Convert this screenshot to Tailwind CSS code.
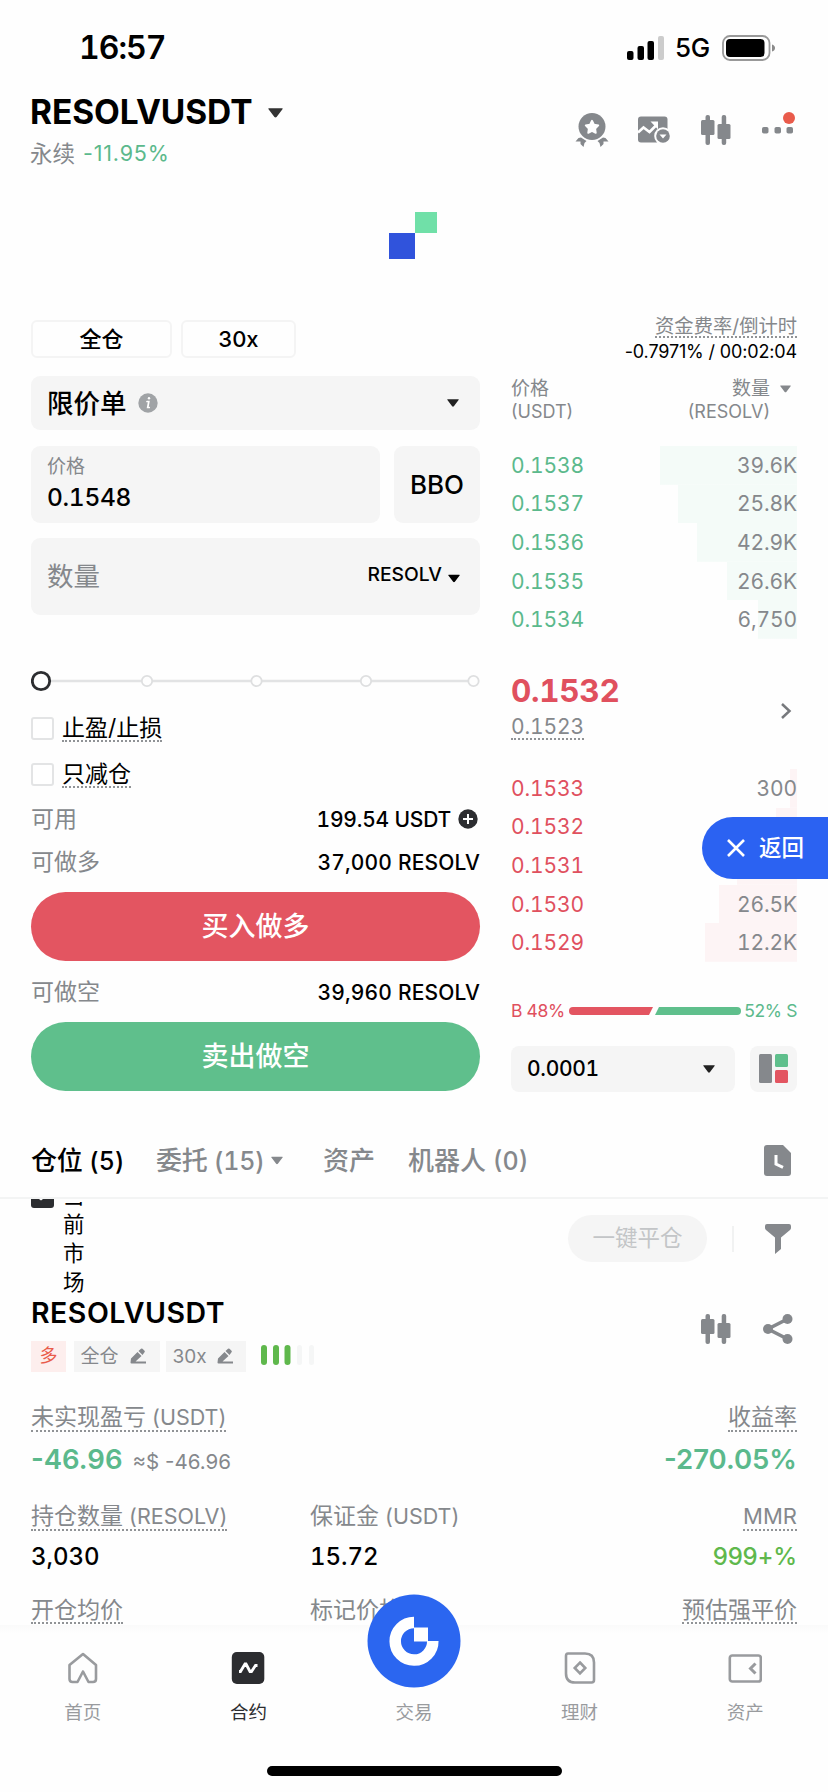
<!DOCTYPE html>
<html lang="zh-CN">
<head>
<meta charset="utf-8">
<title>RESOLVUSDT</title>
<script src="https://cdn.jsdelivr.net/npm/@tailwindcss/browser@4"></script>
</head>
<body class="bg-[#fefefe]">
<svg width="0" height="0" class="hidden">
  <symbol id="tri" viewBox="0 0 14 9"><path d="M1 0h12q1.300 0 .5 1L8 8.300q-1 .9-2 0L.5 1Q-.3 0 1 0Z" fill="currentColor"/></symbol>
  <symbol id="candles" viewBox="0 0 30 30"><g fill="currentColor"><rect x="4.500" y="0" width="4.500" height="30" rx="2"/><rect x="0" y="5" width="13.500" height="15" rx="1.500"/><rect x="20.700" y="0" width="4.500" height="30" rx="2"/><rect x="16.500" y="9" width="13" height="15" rx="1.500"/></g></symbol>
  <symbol id="pen" viewBox="0 0 16 16"><g fill="currentColor"><path d="M1 10.500 7.500 4l4 4L5.500 13.500H16V15.500H1.500Q.5 15.500.5 14.500Z"/><path d="M8.500 3 11 .8q.8-.6 1.500 0l2 2q.8.8 0 1.500L12.500 7Z"/></g></symbol>
</svg>
<main class="relative flex h-[1792px] w-[828px] flex-col overflow-hidden bg-[#fefefe] font-['Inter','Noto_Sans_CJK_SC',sans-serif] leading-none text-black whitespace-nowrap">

  <!-- Status bar -->
  <div class="flex h-[95px] shrink-0 items-center justify-between pl-[79px] pr-[52px]">
    <span class="text-[32px] font-semibold tracking-[-1px] tabular-nums">16:57</span>
    <div class="flex items-center">
      <svg width="37" height="24" viewBox="0 0 37 24"><rect x="0" y="15" width="6.500" height="9" rx="2"/><rect x="10.500" y="10" width="6.500" height="14" rx="2"/><rect x="20.500" y="5" width="6.500" height="19" rx="2"/><rect x="31" y="0" width="6" height="24" rx="2" fill="#ccc"/></svg>
      <span class="ml-[11px] w-[47px] text-[26px] font-medium tracking-[-0.4px]">5G</span>
      <svg width="54" height="26" viewBox="0 0 54 26"><rect x="1" y="1" width="46.500" height="24" rx="7" fill="none" stroke="#999" stroke-width="1.800"/><rect x="4" y="4" width="38.500" height="18" rx="4"/><path d="M50 9.500q3 1 3 3.500t-3 3.500Z" fill="#8a8a8a"/></svg>
    </div>
  </div>

  <!-- Pair header -->
  <header class="flex h-[117px] shrink-0 justify-between pl-[30px] pr-[30px]">
    <div>
      <div class="flex h-[36px] items-center">
        <h1 class="text-[33.500px] font-bold tracking-[-0.1px]">RESOLVUSDT</h1>
        <svg class="ml-[16px] text-[#333]" width="15" height="10"><use href="#tri"/></svg>
      </div>
      <div class="mt-[11px] flex h-[24px] items-center gap-[8px] text-[22.500px] text-[#85888c]"><span>永续</span><span class="text-[21.500px] tracking-[0.8px] text-[#5bb98c]">-11.95%</span></div>
    </div>
    <div class="mt-[16px] flex h-[38px] items-center text-[#85888c]">
      <svg width="34" height="36" viewBox="0 0 34 36"><g fill="currentColor"><circle cx="17" cy="14.500" r="13.500"/><path d="M6 25.500 11.500 29 9.500 31 8.500 35 5.500 32V29.500L.5 29.500 3.500 26Z"/><path d="M28 25.500 22.500 29 24.500 31 25.500 35 28.500 32V29.500L33.500 29.500 30.500 26Z"/></g><path d="m17 8.700 2 4 4.300.7-3.100 3.100.6 4.400-3.800-2-3.800 2 .6-4.400-3.100-3.100 4.300-.7Z" fill="#fff" stroke="#fff" stroke-width="1.800" stroke-linejoin="round"/></svg>
      <svg class="ml-[29px]" width="33" height="28" viewBox="0 0 33 28"><rect x="0" y=".5" width="29.500" height="26" rx="3" fill="currentColor"/><path d="m0 16.500 5.500-5 6 4.500L19 8.500" fill="none" stroke="#fff" stroke-width="2.600"/><path d="M12.500 5.500H20v8Z" fill="#fff"/><circle cx="25" cy="20" r="8.800" fill="#fefefe"/><circle cx="25" cy="20" r="6.800" fill="currentColor"/><path d="M21.500 18.500h7L25 22.500Z" fill="#fff"/></svg>
      <svg class="ml-[30px]" width="30" height="30"><use href="#candles"/></svg>
      <svg class="ml-[31px]" width="36" height="38" viewBox="0 0 36 38"><g fill="currentColor"><rect x="0" y="16" width="6.500" height="6.500" rx="1.800"/><rect x="12.500" y="16" width="6.500" height="6.500" rx="1.800"/><rect x="24.500" y="16" width="6.500" height="6.500" rx="1.800"/></g><circle cx="27" cy="7" r="6" fill="#e95b4b"/></svg>
    </div>
  </header>

  <!-- Loading mark -->
  <div class="flex h-[108px] shrink-0 justify-center">
    <svg width="50" height="48" viewBox="0 0 50 48"><rect x="0" y="21" width="26" height="26" fill="#3053dc"/><rect x="26" y="0" width="22" height="21" fill="#70e0a8"/></svg>
  </div>

  <section class="flex h-[804px] shrink-0 pl-[31px] pr-[31px]">
    <!-- Order form -->
    <div class="flex w-[449px] flex-col">
      <div class="flex h-[38px] gap-[9px] text-[22px] font-medium">
        <div class="flex w-[141px] items-center justify-center rounded-[6px] border-2 border-[#f4f4f4]">全仓</div>
        <div class="flex w-[115px] items-center justify-center rounded-[6px] border-2 border-[#f4f4f4]">30x</div>
      </div>
      <div class="mt-[18px] flex h-[54px] items-center rounded-[9px] bg-[#f5f5f5] px-[16px]">
        <span class="text-[26.500px] font-medium">限价单</span>
        <svg class="ml-[11px]" width="20" height="20" viewBox="0 0 20 20"><circle cx="10" cy="10" r="9.700" fill="#a0a3a6"/><path d="M9 8.500h1.800L9.700 14.500h1.500" fill="none" stroke="#fff" stroke-width="1.700" stroke-linecap="round"/><circle cx="11" cy="5.300" r="1.200" fill="#fff"/></svg>
        <svg class="ml-auto mr-[5px] text-[#222]" width="12" height="8"><use href="#tri"/></svg>
      </div>
      <div class="mt-[16px] flex h-[77px] gap-[14px]">
        <div class="flex flex-1 flex-col rounded-[9px] bg-[#f5f5f5] px-[16px] pt-[11px]">
          <span class="text-[19px] text-[#85888c]">价格</span>
          <span class="mt-[9px] text-[24.500px] font-medium tracking-[-0.3px] tabular-nums">0.1548</span>
        </div>
        <div class="flex w-[86px] items-center justify-center rounded-[9px] bg-[#f5f5f5] text-[26px] font-medium">BBO</div>
      </div>
      <div class="mt-[15px] flex h-[77px] items-center rounded-[9px] bg-[#f5f5f5] px-[16px]">
        <span class="text-[26.500px] text-[#85888c]">数量</span>
        <span class="mb-[3px] ml-auto text-[19.300px] font-medium">RESOLV</span>
        <svg class="ml-[6px] mr-[4px] mt-[3px]" width="12" height="9"><use href="#tri"/></svg>
      </div>
      <svg class="mt-[55px] shrink-0" width="449" height="22" viewBox="0 0 449 22"><path d="M20 11H438" stroke="#e2e3e4" stroke-width="2.500"/><g fill="#fefefe" stroke="#dedfe0" stroke-width="1.800"><circle cx="116" cy="11" r="5.200"/><circle cx="225.500" cy="11" r="5.200"/><circle cx="335" cy="11" r="5.200"/><circle cx="442.500" cy="11" r="5.200"/></g><circle cx="10" cy="11" r="8.700" fill="#fefefe" stroke="#2c2d30" stroke-width="2.800"/></svg>
      <div class="mt-[23px] flex h-[26px] items-center gap-[8px]">
        <span class="size-[23px] rounded-[3px] border-2 border-[#e3e4e5] bg-white"></span>
        <span class="mt-[2px] border-b-2 border-dotted border-[#909396] text-[23px]">止盈/止损</span>
      </div>
      <div class="mt-[20px] flex h-[26px] items-center gap-[8px]">
        <span class="size-[23px] rounded-[3px] border-2 border-[#e3e4e5] bg-white"></span>
        <span class="mt-[2px] border-b-2 border-dotted border-[#909396] text-[23px]">只减仓</span>
      </div>
      <div class="mt-[18px] flex h-[28px] items-center text-[21px]">
        <span class="text-[23px] text-[#85888c]">可用</span><span class="ml-auto font-medium tracking-[-0.2px] tabular-nums">199.54 USDT</span>
        <svg class="ml-[7px] mr-[2px]" width="20" height="20" viewBox="0 0 20 20"><circle cx="10" cy="10" r="9.700" fill="#2c2d30"/><path d="M10 5v10M5 10h10" stroke="#fff" stroke-width="2"/></svg>
      </div>
      <div class="mt-[15px] flex h-[28px] items-center justify-between text-[21px]">
        <span class="text-[23px] text-[#85888c]">可做多</span><span class="font-medium tracking-[0.15px] tabular-nums">37,000 RESOLV</span>
      </div>
      <div class="mt-[16px] flex h-[69px] items-center justify-center rounded-full bg-[#e35561] text-[27px] font-medium text-white">买入做多</div>
      <div class="mt-[17px] flex h-[28px] items-center justify-between text-[21px]">
        <span class="text-[23px] text-[#85888c]">可做空</span><span class="font-medium tracking-[0.15px] tabular-nums">39,960 RESOLV</span>
      </div>
      <div class="mt-[16px] flex h-[69px] items-center justify-center rounded-full bg-[#5fbf8c] text-[27px] font-medium text-white">卖出做空</div>
    </div>

    <!-- Order book -->
    <div class="ml-[31px] flex w-[286px] flex-col text-[#85888c]">
      <div class="mt-[-3px] flex h-[44px] flex-col items-end">
        <span class="border-b-2 border-dotted border-[#909396] text-[19.300px]">资金费率/倒计时</span>
        <span class="mt-[5px] text-[18px] tracking-[-0.15px] text-black">-0.7971% / 00:02:04</span>
      </div>
      <div class="mt-[18px] flex h-[67px] justify-between text-[18px]">
        <div class="flex flex-col gap-[5px]"><span class="text-[19px]">价格</span><span>(USDT)</span></div>
        <div class="flex gap-[10px]"><div class="flex flex-col items-end gap-[5px]"><span class="text-[19px]">数量</span><span>(RESOLV)</span></div><svg class="mr-[6px] mt-[6px]" width="11" height="8"><use href="#tri"/></svg></div>
      </div>
      <div class="flex flex-col text-[21px] tracking-[-0.1px] tabular-nums">
        <div class="flex h-[38.600px] items-center justify-between bg-[linear-gradient(#f4fbf8,#f4fbf8)] bg-right bg-no-repeat bg-[length:137px_100%]"><span class="text-[#5bb98c]">0.1538</span><span>39.6K</span></div>
        <div class="flex h-[38.600px] items-center justify-between bg-[linear-gradient(#f4fbf8,#f4fbf8)] bg-right bg-no-repeat bg-[length:119px_100%]"><span class="text-[#5bb98c]">0.1537</span><span>25.8K</span></div>
        <div class="flex h-[38.600px] items-center justify-between bg-[linear-gradient(#f4fbf8,#f4fbf8)] bg-right bg-no-repeat bg-[length:100px_100%]"><span class="text-[#5bb98c]">0.1536</span><span>42.9K</span></div>
        <div class="flex h-[38.600px] items-center justify-between bg-[linear-gradient(#f4fbf8,#f4fbf8)] bg-right bg-no-repeat bg-[length:70px_100%]"><span class="text-[#5bb98c]">0.1535</span><span>26.6K</span></div>
        <div class="flex h-[38.600px] items-center justify-between bg-[linear-gradient(#f4fbf8,#f4fbf8)] bg-right bg-no-repeat bg-[length:39px_100%]"><span class="text-[#5bb98c]">0.1534</span><span>6,750</span></div>
      </div>
      <div class="flex h-[126px] items-center justify-between pt-[16px] tabular-nums">
        <div class="mb-[5px] flex flex-col items-start">
          <span class="text-[31.500px] font-bold tracking-[-0.3px] text-[#e0505e]">0.1532</span>
          <span class="mt-[10px] border-b-2 border-dotted border-[#909396] pb-px text-[21px] tracking-[-0.1px]">0.1523</span>
        </div>
        <svg class="mr-[5px] mt-[2px]" width="12" height="18" viewBox="0 0 12 18"><path d="m2 2 7.500 7L2 16" fill="none" stroke="#77797d" stroke-width="2.500"/></svg>
      </div>
      <div class="mt-[4px] flex flex-col text-[21px] tracking-[-0.1px] tabular-nums">
        <div class="flex h-[38.600px] items-center justify-between bg-[linear-gradient(#fdf4f5,#fdf4f5)] bg-right bg-no-repeat bg-[length:7px_100%]"><span class="text-[#e0505e]">0.1533</span><span>300</span></div>
        <div class="flex h-[38.600px] items-center justify-between bg-[linear-gradient(#fdf4f5,#fdf4f5)] bg-right bg-no-repeat bg-[length:21px_100%]"><span class="text-[#e0505e]">0.1532</span></div>
        <div class="flex h-[38.600px] items-center justify-between bg-[linear-gradient(#fdf4f5,#fdf4f5)] bg-right bg-no-repeat bg-[length:60px_100%]"><span class="text-[#e0505e]">0.1531</span></div>
        <div class="flex h-[38.600px] items-center justify-between bg-[linear-gradient(#fdf4f5,#fdf4f5)] bg-right bg-no-repeat bg-[length:78px_100%]"><span class="text-[#e0505e]">0.1530</span><span>26.5K</span></div>
        <div class="flex h-[38.600px] items-center justify-between bg-[linear-gradient(#fdf4f5,#fdf4f5)] bg-right bg-no-repeat bg-[length:92px_100%]"><span class="text-[#e0505e]">0.1529</span><span>12.2K</span></div>
      </div>
      <div class="mt-[38px] flex h-[22px] items-center justify-between text-[17.500px] tracking-[-0.4px]">
        <span class="text-[#e0505e]">B 48%</span>
        <svg width="172" height="8" viewBox="0 0 172 8"><path d="M4 0H84L80 8H4A4 4 0 0 1 4 0Z" fill="#e35561"/><path d="M90 0H168A4 4 0 0 1 168 8H86Z" fill="#5fbf8c"/></svg>
        <span class="text-[#5bb98c]">52% S</span>
      </div>
      <div class="mt-[24px] flex h-[46px] justify-between">
        <div class="flex w-[224px] items-center justify-between rounded-[8px] bg-[#f5f5f5] pl-[16px] pr-[20px] text-[21px] font-medium tracking-[-0.3px] text-black tabular-nums"><span>0.0001</span><svg class="text-[#222]" width="12" height="8"><use href="#tri"/></svg></div>
        <div class="flex w-[47px] items-center justify-center rounded-[8px] bg-[#f5f5f5]"><svg width="29" height="29" viewBox="0 0 29 29"><rect width="13" height="29" rx="1.500" fill="#85888c"/><rect x="16" width="13" height="13" rx="1.500" fill="#5fbf8c"/><rect x="16" y="16" width="13" height="13" rx="1.500" fill="#e35561"/></svg></div>
      </div>
    </div>
  </section>

  <!-- Tabs -->
  <nav class="flex h-[75px] shrink-0 items-center border-b-2 border-[#f3f4f4] px-[31px] text-[25px] font-medium text-[#85888c] tabular-nums">
    <span class="w-[125px] tracking-[-0.2px] text-black"><span class="text-[26px]">仓位</span> (5)</span>
    <span class="flex w-[167px] items-center"><span class="tracking-[-0.3px]"><span class="text-[26px]">委托</span> (15)</span><svg class="ml-[6px]" width="12" height="9"><use href="#tri"/></svg></span>
    <span class="w-[85px] text-[26px]">资产</span>
    <span><span class="text-[26px]">机器人</span> (0)</span>
    <svg class="ml-auto mr-[6px]" width="27" height="31" viewBox="0 0 27 31"><path d="M3 0H19L27 8V28q0 3-3 3H3Q0 31 0 28V3Q0 0 3 0Z" fill="currentColor"/><path d="M12 10v9l7 3.300" fill="none" stroke="#fff" stroke-width="3"/></svg>
  </nav>

  <!-- Positions -->
  <section class="flex h-[426px] shrink-0 flex-col overflow-hidden px-[31px] text-[#85888c]">
    <div class="flex h-[98px] shrink-0">
      <svg width="23" height="9" viewBox="0 0 23 9"><path d="M0 0H23V6q0 3-3 3H3Q0 9 0 6Z" fill="#2c2d30"/><path d="m8 0 2 1.500L12 0" fill="#fff"/></svg>
      <div class="ml-[9px] mt-[3px] h-[95px] overflow-hidden"><div class="mt-[-21px] w-[22px] whitespace-normal break-all text-[21.500px] leading-[29px] text-black">当前市场</div></div>
      <div class="ml-auto mt-[16px] flex h-[47px] items-center">
        <div class="flex h-[47px] w-[139px] items-center justify-center rounded-full bg-[#f5f5f5] text-[22.500px] text-[#c3c5c7]">一键平仓</div>
        <div class="ml-[25px] h-[26px] w-[2px] bg-[#f1f2f2]"></div>
        <svg class="ml-[31px] mr-[6px]" width="26" height="30" viewBox="0 0 26 30"><path d="M2 0H24q2 0 2 2V4q0 1-1 2L16 13.500V25L10 30V13.500L1 6Q0 5 0 4V2Q0 0 2 0Z" fill="currentColor"/></svg>
      </div>
    </div>
    <div class="flex h-[75px] shrink-0 justify-between">
      <div>
        <h2 class="mt-[2px] text-[28.500px] font-semibold tracking-[0.5px] text-black">RESOLVUSDT</h2>
        <div class="mt-[13px] flex h-[31px] items-center text-[19px]">
          <span class="flex h-full w-[35px] items-center justify-center bg-[#fdeeed] text-[18px] text-[#e95b4b]">多</span>
          <span class="ml-[8px] flex h-full w-[86px] items-center justify-center gap-[11px] bg-[#f5f5f5] pr-[8px]"><span>全仓</span><svg width="16" height="16"><use href="#pen"/></svg></span>
          <span class="ml-[6px] flex h-full w-[80px] items-center justify-center gap-[10px] bg-[#f5f5f5] pr-[7px]"><span>30x</span><svg width="16" height="16"><use href="#pen"/></svg></span>
          <svg class="mb-[2px] ml-[15px]" width="54" height="20" viewBox="0 0 54 20"><g fill="#5fb84c"><rect width="6" height="20" rx="3"/><rect x="12" width="6" height="20" rx="3"/><rect x="23.500" width="6" height="20" rx="3"/></g><g fill="#f5f6f6"><rect x="36" width="5" height="20" rx="2.500"/><rect x="48" width="5" height="20" rx="2.500"/></g></svg>
        </div>
      </div>
      <div class="mt-[17px] flex h-[30px]">
        <svg width="30" height="30"><use href="#candles"/></svg>
        <svg class="ml-[32px] mr-[4px]" width="30" height="30" viewBox="0 0 30 30"><path d="M24.500 5 5 15 24.500 25" fill="none" stroke="currentColor" stroke-width="3.600"/><g fill="currentColor"><circle cx="24.500" cy="5" r="5"/><circle cx="5" cy="15" r="5"/><circle cx="24.500" cy="25" r="5"/></g></svg>
      </div>
    </div>
    <div class="mt-[34px] flex h-[98px] shrink-0 justify-between">
      <div class="flex flex-col items-start">
        <span class="border-b-2 border-dotted border-[#909396] pb-px text-[23px]">未实现盈亏<span class="text-[21.500px]"> (USDT)</span></span>
        <div class="mt-[14px] flex items-baseline gap-[10px]"><span class="text-[27.500px] font-semibold text-[#5bb98c]">-46.96</span><span class="text-[20.500px]">≈$ -46.96</span></div>
      </div>
      <div class="flex flex-col items-end">
        <span class="border-b-2 border-dotted border-[#909396] pb-px text-[23px]">收益率</span>
        <span class="mt-[14px] text-[27.500px] font-semibold text-[#5bb98c]">-270.05%</span>
      </div>
    </div>
    <div class="mt-px flex h-[94px] shrink-0">
      <div class="flex w-[279px] flex-col items-start">
        <span class="border-b-2 border-dotted border-[#909396] pb-px text-[23px]">持仓数量<span class="text-[21.500px]"> (RESOLV)</span></span>
        <span class="mt-[14px] text-[24px] font-medium text-black tabular-nums">3,030</span>
      </div>
      <div class="flex flex-col items-start">
        <span class="pb-[3px] text-[23px]">保证金<span class="text-[21.500px]"> (USDT)</span></span>
        <span class="mt-[14px] text-[24px] font-medium text-black tabular-nums">15.72</span>
      </div>
      <div class="ml-auto flex flex-col items-end">
        <span class="border-b-2 border-dotted border-[#909396] pb-[2px] text-[22px]">MMR</span>
        <span class="mt-[14px] text-[24px] font-medium tracking-[-0.2px] text-[#5fb84c]">999+%</span>
      </div>
    </div>
    <div class="flex shrink-0 items-start">
      <div class="w-[279px]"><span class="inline-block border-b-2 border-dotted border-[#909396] text-[23px]">开仓均价</span></div>
      <span class="text-[23px]">标记价格</span>
      <span class="ml-auto border-b-2 border-dotted border-[#909396] text-[23px]">预估强平价</span>
    </div>
  </section>

  <!-- Bottom navigation -->
  <footer class="relative flex h-[167px] shrink-0 flex-col bg-linear-to-b from-[#fafafa] from-0% to-[#fefefe] to-5% text-[#999b9e]">
    <div class="flex h-[101px] pt-[26px] text-[18.500px]">
      <div class="flex flex-1 flex-col items-center"><svg width="34" height="34" viewBox="0 0 34 34"><path d="M17 3 L30 14V28q0 3-3 3H22.500L17 20.500 11.500 31H6.500q-3 0-3-3V14Z" fill="none" stroke="currentColor" stroke-width="2.600" stroke-linejoin="round"/></svg><span class="mt-[18px]">首页</span></div>
      <div class="flex flex-1 flex-col items-center text-[#2c2d30]"><svg width="34" height="34" viewBox="0 0 34 34"><rect x=".8" y="1" width="32.500" height="32" rx="5" fill="currentColor"/><path d="M8 20.500h1.500l4.500-7.500h1l4 7.500h1.500l4-6h2" fill="none" stroke="#fff" stroke-width="2.800"/></svg><span class="mt-[18px]">合约</span></div>
      <div class="flex flex-1 flex-col items-center"><span class="mt-[52px]">交易</span></div>
      <div class="flex flex-1 flex-col items-center"><svg width="34" height="34" viewBox="0 0 34 34"><path d="M5 2.500H22q9 0 9 9V29q0 2.500-2.500 2.500H12q-9 0-9-9V5Q3 2.500 5 2.500Z" fill="none" stroke="currentColor" stroke-width="2.600"/><path d="m17 11.500 5.300 5.500L17 22.500 11.700 17Z" fill="none" stroke="currentColor" stroke-width="2.600"/></svg><span class="mt-[18px]">理财</span></div>
      <div class="flex flex-1 flex-col items-center"><svg width="34" height="34" viewBox="0 0 34 34"><rect x="1.800" y="4.500" width="31" height="26" rx="2.500" fill="none" stroke="currentColor" stroke-width="2.600"/><path d="M27.500 12.500 22.500 17.500l5 5" fill="none" stroke="currentColor" stroke-width="3"/></svg><span class="mt-[18px]">资产</span></div>
    </div>
    <svg class="absolute left-[367px] top-[-31px]" width="94" height="94" viewBox="0 0 94 94"><circle cx="47" cy="47" r="46.500" fill="#2b66f0"/><path d="M47 28.500A18.800 18.800 0 1 0 65.800 47" fill="none" stroke="#fff" stroke-width="11.500"/><path d="M47 33.500H61V47.500H47Z" fill="#fff"/></svg>
    <div class="mx-auto mt-[40px] h-[10px] w-[295px] rounded-full bg-black"></div>
  </footer>

  <!-- Floating return button -->
  <div class="absolute right-0 top-[817px] flex h-[62px] w-[126px] items-center rounded-l-full bg-[#2b62f2] pl-[25px] text-white">
    <svg width="18" height="18" viewBox="0 0 18 18"><path d="m1 1 16 16M17 1 1 17" stroke="currentColor" stroke-width="2.600"/></svg>
    <span class="ml-[14px] text-[22.500px] font-medium">返回</span>
  </div>
</main>
</body>
</html>
